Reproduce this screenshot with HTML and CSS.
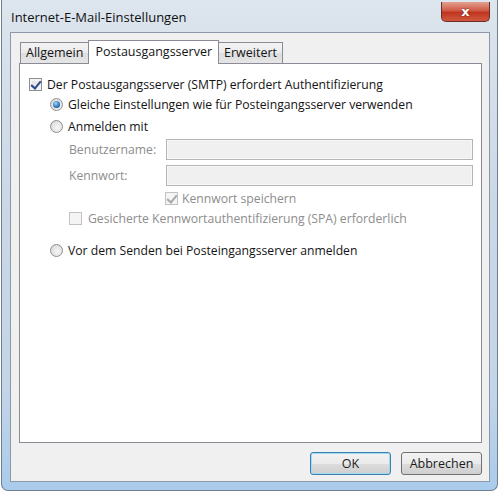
FILE: index.html
```html
<!DOCTYPE html>
<html lang="de">
  <head>
    <meta charset="UTF-8" />
    <title>Internet-E-Mail-Einstellungen</title>
    <link rel="stylesheet" href="styles.css">
  </head>
  <body>
    <div class="window">
      <!-- title bar -->
      <div class="titlebar">
        <span class="title">Internet-E-Mail-Einstellungen</span>
        <button class="close">x</button>
      </div>

      <div class="client">
        <div class="tabs">
          <div class="tab">Allgemein</div>
          <div class="tab active">Postausgangsserver</div>
          <div class="tab">Erweitert</div>
        </div>

        <div class="panel">
          <div class="row">
            <span class="check checked"></span>
            <span>Der Postausgangsserver (SMTP) erfordert Authentifizierung</span>
          </div>
          <div class="row indent-1">
            <span class="radio selected"></span>
            <span>Gleiche Einstellungen wie für Posteingangsserver verwenden</span>
          </div>
          <div class="row indent-1 gap-2">
            <span class="radio"></span>
            <span>Anmelden mit</span>
          </div>

          <div class="field first">
            <label>Benutzername:</label>
            <div class="input"></div>
          </div>
          <div class="field">
            <label>Kennwort:</label>
            <div class="input"></div>
          </div>

          <div class="row disabled save-row">
            <span class="check checked"></span>
            <span>Kennwort speichern</span>
          </div>
          <div class="row disabled indent-2">
            <span class="check"></span>
            <span>Gesicherte Kennwortauthentifizierung (SPA) erforderlich</span>
          </div>

          <div class="row indent-1 gap-12">
            <span class="radio"></span>
            <span>Vor dem Senden bei Posteingangsserver anmelden</span>
          </div>
        </div>

        <div class="buttons">
          <button class="btn default">OK</button>
          <button class="btn">Abbrechen</button>
        </div>
      </div>
    </div>
  </body>
</html>
```

FILE: styles.css
```css
* {
  margin: 0;
  padding: 0;
  box-sizing: border-box;
}
body {
  background-color: #ffffff;
  font-family: "Open Sans", "Noto Sans", sans-serif;
  font-size: 12.2px;
  color: #141414;
}

/* window frame */
.window {
  width: 497px;
  height: 491px;
  margin-left: 1px;
  padding: 0 7px 8px 8px;
  border: 1px solid #6f7f90;
  border-top: 0;
  border-radius: 0 0 7px 7px;
  background: linear-gradient(180deg, #dde5ee 0%, #cbd8e6 40%, #c3d5e8 80%, #a9cbeb 100%);
  display: flex;
  flex-direction: column;
}
.titlebar {
  height: 32px;
  display: flex;
  align-items: flex-start;
  justify-content: space-between;
}
.title {
  margin-top: 8px;
  margin-left: 1px;
  font-size: 13px;
  color: #101010;
}
.close {
  width: 49px;
  height: 20px;
  margin-top: 2px;
  border: 1px solid #6b2d2a;
  border-top: 0;
  border-radius: 0 0 5px 5px;
  background: linear-gradient(180deg, #e4a190 0%, #cf5a45 45%, #c1351f 55%, #d0583f 100%);
  color: #ffffff;
  font-family: "DejaVu Sans", sans-serif;
  font-weight: bold;
  font-size: 13px;
  line-height: 16px;
  text-shadow: 0 0 2px #6b1e14;
}

/* client area */
.client {
  flex: 1;
  background-color: #f0f0f0;
  border: 1px solid #8a98a8;
  display: flex;
  flex-direction: column;
  padding: 7px 7px 0 8px;
}
.tabs {
  display: flex;
  align-items: flex-end;
  height: 23px;
  padding-left: 1px;
  position: relative;
  z-index: 1;
}
.tab {
  height: 21px;
  padding: 0 5px;
  border: 1px solid #898c95;
  border-bottom: 0;
  background: linear-gradient(180deg, #f3f3f3 0%, #ebebeb 50%, #dedede 51%, #e5e5e5 100%);
  margin-right: -1px;
  line-height: 19px;
  font-size: 12.5px;
}
.tab.active {
  height: 24px;
  margin-bottom: -1px;
  padding: 0 6px;
  background: #ffffff;
  line-height: 21px;
}
.panel {
  height: 380px;
  background-color: #ffffff;
  border: 1px solid #898c95;
  padding: 10px 0 0 9px;
  display: flex;
  flex-direction: column;
}

.row {
  height: 20px;
  display: flex;
  align-items: center;
  gap: 5px;
}
.indent-1 {
  margin-left: 21px;
}
.indent-2 {
  margin-left: 40px;
  gap: 6px;
}
.gap-2 {
  margin-top: 2px;
}
.gap-12 {
  margin-top: 12px;
}
.disabled {
  color: #8d8d8d;
}
.save-row {
  margin-left: 136px;
  margin-top: 2px;
  gap: 4px;
}

/* checkbox and radio */
.check {
  width: 13px;
  height: 13px;
  border: 1px solid #8e8f8f;
  background: linear-gradient(135deg, #dcdcdc 0%, #f6f6f6 100%);
  box-shadow: inset 0 0 0 2px #f4f4f4;
  position: relative;
  flex: none;
}
.check.checked::after {
  content: "";
  position: absolute;
  left: 3px;
  top: 0px;
  width: 4px;
  height: 8px;
  border: solid #2a4a8c;
  border-width: 0 2px 2px 0;
  transform: rotate(40deg);
}
.disabled .check {
  border-color: #c2c2c2;
  background: #f4f4f4;
}
.disabled .check.checked::after {
  border-color: #a8a8a8;
}
.radio {
  width: 13px;
  height: 13px;
  border-radius: 50%;
  border: 1px solid #8d8d8d;
  background: radial-gradient(circle at 60% 60%, #f6f6f6 0%, #d4d4d4 100%);
  position: relative;
  flex: none;
}
.radio.selected::after {
  content: "";
  position: absolute;
  left: 2px;
  top: 2px;
  width: 7px;
  height: 7px;
  border-radius: 50%;
  background: radial-gradient(circle at 40% 35%, #a9d6f5 0%, #2a79c0 55%, #173f80 100%);
}

/* text fields */
.field {
  display: flex;
  align-items: center;
  margin-left: 40px;
  margin-top: 5px;
  color: #8d8d8d;
}
.field.first {
  margin-top: 3px;
}
.field label {
  width: 97px;
}
.input {
  width: 307px;
  height: 21px;
  border: 1px solid #b5b5b5;
  background-color: #f0f0f0;
  box-shadow: inset 0 0 0 1px #f7f7f7;
}

/* dialog buttons */
.buttons {
  display: flex;
  justify-content: flex-end;
  gap: 10px;
  padding-top: 9px;
}
.btn {
  width: 81px;
  height: 23px;
  border: 1px solid #707070;
  border-radius: 3px;
  background: linear-gradient(180deg, #f2f2f2 0%, #ebebeb 50%, #dddddd 51%, #cfcfcf 100%);
  font-family: "Open Sans", "Noto Sans", sans-serif;
  font-size: 12.5px;
  color: #1b1b1b;
}
.btn.default {
  border-color: #3c7fb1;
  box-shadow: inset 0 0 0 1px #9fdaf0;
}
```
